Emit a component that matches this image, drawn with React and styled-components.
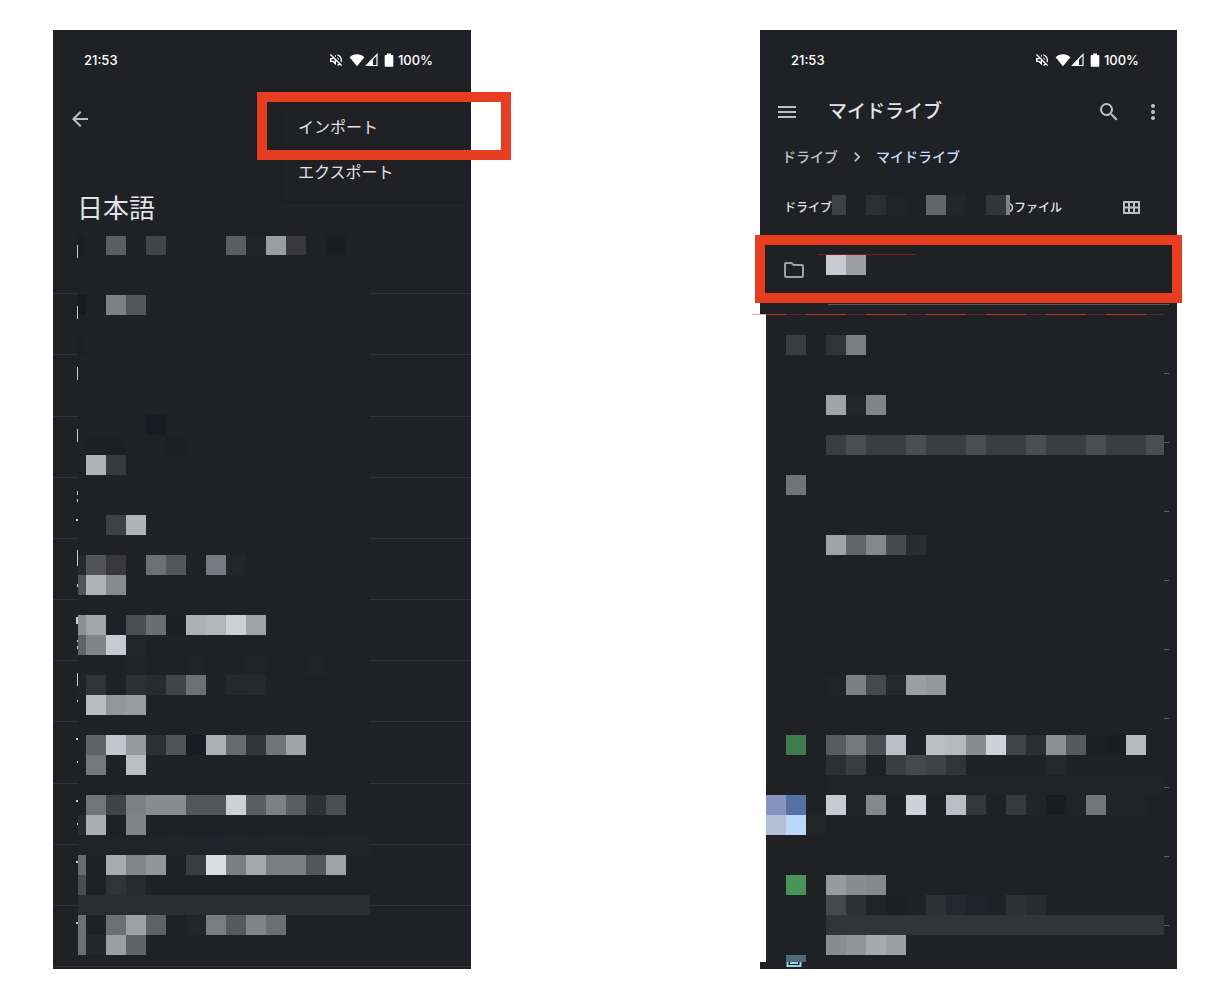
import React from "react";
import styled, { createGlobalStyle } from "styled-components";
import {
  MdArrowBack,
  MdChevronRight,
  MdMenu,
  MdMoreVert,
  MdOutlineFolder,
  MdOutlineVolumeOff,
  MdSearch,
} from "react-icons/md";

const color = {
  surface: "#202124",
  text: "#e2e3e7",
  muted: "#bdc1c6",
  dim: "#9aa0a6",
  link: "#c6dafc",
  rule: "#323336",
  driveRule: "#5c5e61",
  mark: "#e83d21",
};

const GlobalStyle = createGlobalStyle`
  *, *::before, *::after { box-sizing: border-box; }
  body {
    margin: 0;
    background: #fff;
    color: ${color.text};
    font-family: Inter, "Noto Sans CJK JP", sans-serif;
  }
`;

const Page = styled.main`
  display: flex;
  justify-content: space-between;
  gap: 24px;
  padding: 30px 41px 37px 53px;
`;

const Phone = styled.section`
  position: relative;
  display: flex;
  flex-direction: column;
  flex: 0 1 ${(p) => p.$basis}px;
  min-width: 0;
  background: ${color.surface};
`;

/* Status bar */
const StatusBar = styled.div`
  display: flex;
  align-items: center;
  justify-content: space-between;
  height: 60px;
  padding: 0 38px 0 31px;
  color: #fff;
  font-size: 13px;
  font-weight: 500;
  line-height: 20px;
`;

const StatusIcons = styled.div`
  display: flex;
  align-items: center;

  svg { display: block; }
  svg:first-child { margin-right: 5px; }
`;

const Percent = styled.span`
  margin-left: 1px;
`;

/* Buttons and bars */
const IconButton = styled.button`
  display: flex;
  align-items: center;
  justify-content: center;
  width: 24px;
  height: 24px;
  padding: 0;
  border: 0;
  background: none;
  color: ${color.muted};
  font-size: 24px;
  cursor: pointer;
`;

const BackBar = styled.header`
  display: flex;
  align-items: center;
  height: 58px;
  padding: 0 15px;
`;

const LanguageTitle = styled.h1`
  margin: 0;
  padding: 41px 24px 4px;
  font-size: 26px;
  font-weight: 400;
  line-height: 40px;
`;

const DriveBar = styled.header`
  display: flex;
  align-items: center;
  height: 44px;
  padding: 0 12px 0 15px;
  gap: 20px;
`;

const DriveTitle = styled.h1`
  flex: 1;
  margin: 0 0 0 9px;
  font-size: 19px;
  font-weight: 500;
  line-height: 28px;
`;

const Breadcrumb = styled.nav`
  display: flex;
  align-items: center;
  gap: 9px;
  height: 46px;
  padding: 0 22px;
  color: ${color.muted};
  font-size: 14px;
  line-height: 20px;
`;

const Crumb = styled.a`
  color: ${(p) => (p.$current ? color.link : color.muted)};
  font-weight: 500;
  text-decoration: none;
`;

const SortRow = styled.div`
  display: flex;
  align-items: center;
  height: 26px;
  margin: 15px 0;
  padding: 0 33px 0 24px;
  font-size: 12px;
  font-weight: 500;
  line-height: 26px;
`;

const OwnerTail = styled.span`
  flex: 1;
  margin-left: -8px;
`;

/* Options menu */
const OptionsMenu = styled.div`
  position: absolute;
  top: 74px;
  right: 4px;
  display: flex;
  flex-direction: column;
  width: 185px;
  padding-bottom: 7px;
  border-radius: 3px;
  box-shadow: 0 1px 3px rgba(0, 0, 0, 0.2);
`;

const MenuItem = styled.button`
  height: 45px;
  padding: 0 16px;
  border: 0;
  background: none;
  color: ${color.text};
  font-family: inherit;
  font-size: 16px;
  line-height: 24px;
  text-align: left;
  cursor: pointer;
`;

const MenuMark = styled.div`
  position: absolute;
  top: 62px;
  right: -40px;
  width: 254px;
  height: 68px;
  border: 10px solid ${color.mark};
  pointer-events: none;
`;

const RowMark = styled.div`
  position: absolute;
  top: -1px;
  right: -5px;
  left: -5px;
  height: 68px;
  border: 10px solid ${color.mark};
  pointer-events: none;
`;

/* Lists */
const WordList = styled.ul`
  display: grid;
  grid-template-rows: repeat(12, 1fr);
  height: 734px;
  margin: 0;
  padding: 0;
  list-style: none;
`;

const WordRow = styled.li`
  display: flex;
  flex-direction: column;
  align-items: flex-end;
  width: 100%;
  padding-right: calc(100% - 25px);
  border-bottom: 1px solid ${color.rule};
`;

const Sliver = styled.span`
  width: ${(p) => p.$width}px;
  height: ${(p) => p.$height}px;
  margin-top: ${(p) => p.$gap}px;
  background: #c9cacd;
`;

const FileList = styled.ul`
  margin: 0;
  padding: 0;
  list-style: none;
`;

const FileRow = styled.li`
  position: relative;
  display: flex;
  align-items: center;
  height: ${(p) => (p.$cut ? 43 : 69)}px;
  padding: 0 0 2px 22px;
  overflow: ${(p) => (p.$cut ? "hidden" : "visible")};

  &::after {
    content: "";
    position: absolute;
    right: 8px;
    bottom: 0;
    left: 68px;
    height: ${(p) => (p.$cut ? 0 : 1)}px;
    background: ${color.driveRule};
  }
`;

const FolderIcon = styled(MdOutlineFolder)`
  width: 24px;
  height: 24px;
  color: ${color.dim};
`;

const FolderName = styled.div`
  display: flex;
  align-self: flex-start;
  margin: 18px 0 0 12px;
  padding-left: 8px;
  width: 98px;
  border-top: 1px solid #6b241e;
`;

const ArchiveIcon = styled.svg`
  align-self: flex-end;
  width: 16px;
  height: 20px;
  margin-left: 4px;
`;

/* Pixelated cover */
const Strip = styled.div`
  position: relative;
  display: flex;
  align-self: flex-start;
  width: 178px;
  height: 20px;
  background: ${color.surface};
`;

const Block = styled.span`
  width: ${(p) => p.$width || 20}px;
  height: 20px;
  background: ${(p) => p.$tone};
`;

const WordMosaic = styled.div`
  position: absolute;
  top: 206px;
  left: 25px;
  display: grid;
  grid-template-columns: 8px repeat(14, 20px) 4px;
  grid-template-rows: 19px repeat(35, 20px) 6px;
  background: ${color.surface};
`;

const FileMosaic = styled.div`
  position: absolute;
  top: 284px;
  left: -8px;
  display: grid;
  grid-template-columns: 14px repeat(19, 20px) 18px;
  grid-template-rows: 1px repeat(32, 20px) 7px;
  background: linear-gradient(to right, #fff 14px, ${color.surface} 14px);
`;

const Cell = styled.span`
  grid-row: ${(p) => p.$row};
  grid-column: ${(p) => p.$column};
  background: ${(p) => p.$tone};
`;

/* Each line: grid row, first grid column, then one tone per cell ("." is empty). */
const wordTones = [
  [1, 1, "1c1d20 . 5c5d61 . 434447 . . . 5c5d61 222326 9c9da0 39393c . 1c1d20"],
  [4, 1, "191a1d . 7f8084 545558"],
  [6, 1, "1e1f22"],
  [9, 4, "1f2023"],
  [10, 4, "1f2023 181c20"],
  [11, 2, "1e1f23 1e1f23 . . 1e1f24"],
  [12, 2, "b1b2b6 38393c"],
  [15, 3, "404144 b2b3b7"],
  [17, 1, "28292c 535457 39393c . 6e6f72 545558 . 78797e 242528"],
  [18, 1, "525356 b0b1b5 88898d"],
  [20, 1, "8e8f92 a4a5a8 202126 4d4e51 6c6d70 1b1f21 aeafb2 b4b5b9 cfd0d3 a1a2a5"],
  [21, 1, "616265 838488 c9cacf 242528"],
  [22, 4, "222326 . . 222326 . . 222326 . . 222326"],
  [23, 1, "222326 333437 . 2e2f33 2a2b2d 434447 6e6f72 . 27282b 28292c"],
  [24, 2, "bbbcc1 95969a 9a9b9f"],
  [26, 2, "626366 c5c6cb 98999d 2f3033 535457 181c20 aeafb3 696a6d 353639 727376 a3a4a8"],
  [27, 2, "77787b . bcbdc1"],
  [29, 2, "737477 424346 7f8084 8b8c8f 8b8c8f 555659 555659 cfd0d4 5d5e62 7f8084 5d5e62 303134 4d4e52"],
  [30, 1, "2b2c2f acadb1 . 838488"],
  [31, 1, "222326 222328 222326 222326 222326 232427 222326 222328 232427 222326 232427 232427 222326 232427 232427 222326"],
  [32, 1, "6a6b6e . a9aaae 848588 94959a . 3b3c3f dcdde1 7d7e82 a7a8ac 7d7e82 7d7e82 55565a a1a2a5"],
  [33, 1, "4b4c4f . 323336 292a2e"],
  [35, 1, "6f7073 . 6e6f72 9fa0a4 606165 . 242528 7b7c80 58595d 838488 6d6e71"],
  [36, 1, "6f7073 262729 9d9ea3 626367"],
];

const fileTones = [
  [3, 3, "3b3c3f . 323336 7b7c7f"],
  [6, 5, "a2a3a6 242528 838487"],
  [8, 5, "3c3d40 4c4d50 3c3d40 3c3d40 4c4d50 3c3d40 3c3d40 4c4d50 3c3d40 3c3d40 4c4d50 3c3d40 3c3d40 4c4d50 3c3d40 3c3d40 4c4d50"],
  [10, 3, "727377"],
  [13, 5, "a1a2a5 646568 85868a 4a4b4e 2b2c2f"],
  [16, 3, "212225"],
  [20, 5, "222326 7e7f83 47484b 27282c 9d9ea2 95969a"],
  [23, 3, "3e7e4c . 5a5b5e 77787b 4c4d51 bcbdc2 . bdbec2 b8b9bd 8b8c90 d1d2d7 434447 2c2d30 8e8f93 58595c 1e1f22 1c1d20 b8b9bd"],
  [24, 5, "2d2e32 3b3c3f . 3c3d40 47484b 404144 333437 . . . . 27282b"],
  [26, 2, "8494be 5371a3 . c9cacf 222326 86878a . d0d1d6 . bcbdc2 363739 . 38393b 202528 1b1c1f 222326 737477 222326 222326"],
  [27, 2, "b3c0d8 bcd8f8 242528"],
  [30, 3, "479559 . 999a9e 8b8c8f 87888c"],
  [31, 5, "47484b 303134 222326 1e1f22 . 303134 24292d 222328 . 303134 2a2b2e"],
  [33, 5, "8b8c91 939498 a8a9ad 9d9ea2"],
  [34, 3, "4b6a76"],
];

/* Edges of letters beside the cover: [gap above, height, width] */
const wordEdges = [
  [[12, 13, 1]],
  [[12, 13, 1]],
  [[12, 13, 1]],
  [[12, 13, 1]],
  [[13, 4, 1], [4, 3, 1], [17, 2, 2]],
  [[11, 16, 1], [18, 3, 1]],
  [[17, 7, 2], [16, 2, 1], [4, 3, 1]],
  [[12, 13, 1], [14, 2, 1]],
  [[16, 2, 2], [21, 2, 1]],
  [[16, 2, 2], [21, 2, 1]],
  [[16, 2, 2]],
  [[16, 2, 2]],
];

function Cells({ lines }) {
  return lines.flatMap(([row, start, tones]) =>
    tones.split(" ").map((tone, i) =>
      tone === "." ? null : (
        <Cell key={`${row}-${start + i}`} $row={row} $column={start + i} $tone={`#${tone}`} />
      )
    )
  );
}

function Status() {
  return (
    <StatusBar>
      <span>21:53</span>
      <StatusIcons>
        <MdOutlineVolumeOff size={16} />
        <svg width="16" height="14" viewBox="0 0 16 14" fill="#fff">
          <path d="M8 13.2.6 4.2C2.6 2.3 5.100 1.200 8 1.200s5.400 1.100 7.400 3z" />
        </svg>
        <svg width="13" height="14" viewBox="0 0 13 14">
          <path d="M12 1.500V12.500H1.500z" fill="none" stroke="#fff" strokeWidth="1.200" />
          <path d="M8 5.500V12.800H.8z" fill="#fff" />
        </svg>
        <svg width="19" height="14" viewBox="0 0 19 14" fill="#fff">
          <path d="M9 .5h4v1.500h1.500q.8 0 .8.800V13q0 .8-.8.800H7.500q-.8 0-.8-.8V2.800q0-.8.8-.8H9z" />
        </svg>
        <Percent>100%</Percent>
      </StatusIcons>
    </StatusBar>
  );
}

function GridIcon() {
  return (
    <svg width="18" height="14" viewBox="0 0 18 14" fill="none" stroke="currentColor" strokeWidth="2">
      <path d="M1 1h15v11H1zM1 6.500h15M6 1v11M11 1v11" />
    </svg>
  );
}

function ImportPhone() {
  return (
    <Phone $basis={418}>
      <Status />
      <BackBar>
        <IconButton type="button" aria-label="戻る">
          <MdArrowBack />
        </IconButton>
      </BackBar>
      <LanguageTitle>日本語</LanguageTitle>
      <WordList>
        {wordEdges.map((edges, i) => (
          <WordRow key={i}>
            {edges.map(([gap, height, width], j) => (
              <Sliver key={j} $gap={gap} $height={height} $width={width} />
            ))}
          </WordRow>
        ))}
      </WordList>
      <WordMosaic>
        <Cells lines={wordTones} />
        <Cell $row={34} $column="1 / -1" $tone="#2c2d31" />
      </WordMosaic>
      <OptionsMenu>
        <MenuItem type="button">インポート</MenuItem>
        <MenuItem type="button">エクスポート</MenuItem>
      </OptionsMenu>
      <MenuMark />
    </Phone>
  );
}

function DrivePhone() {
  return (
    <Phone $basis={417}>
      <Status />
      <DriveBar>
        <IconButton type="button" aria-label="メニュー">
          <MdMenu />
        </IconButton>
        <DriveTitle>マイドライブ</DriveTitle>
        <IconButton type="button" aria-label="検索">
          <MdSearch />
        </IconButton>
        <IconButton type="button" aria-label="その他">
          <MdMoreVert />
        </IconButton>
      </DriveBar>
      <Breadcrumb>
        <Crumb href="#drive">ドライブ</Crumb>
        <MdChevronRight size={20} />
        <Crumb href="#my-drive" $current>
          マイドライブ
        </Crumb>
      </Breadcrumb>
      <SortRow>
        <span>ドライブ</span>
        <Strip>
          <Block $width={14} $tone="#404144" />
          <Block $tone={color.surface} />
          <Block $tone="#2d2e31" />
          <Block $tone="#222326" />
          <Block $tone={color.surface} />
          <Block $tone="#646568" />
          <Block $tone="#242528" />
          <Block $tone={color.surface} />
          <Block $tone="#343538" />
          <Block $width={4} $tone="#808185" />
        </Strip>
        <OwnerTail>のファイル</OwnerTail>
        <IconButton type="button" aria-label="グリッド表示">
          <GridIcon />
        </IconButton>
      </SortRow>
      <FileList>
        <FileRow>
          <FolderIcon />
          <FolderName>
            <Block $tone="#c9cacf" />
            <Block $tone="#9d9ea2" />
          </FolderName>
          <RowMark />
        </FileRow>
        {Array.from({ length: 9 }, (_, i) => (
          <FileRow key={i} />
        ))}
        <FileRow $cut>
          <ArchiveIcon viewBox="0 0 16 20">
            <path d="M1.500 2v17h13V2" fill="none" stroke="#8fd3e8" strokeWidth="2" />
            <path d="M4 15h8v2H4z" fill="#8fd3e8" />
          </ArchiveIcon>
        </FileRow>
      </FileList>
      <FileMosaic>
        <Cell $row={1} $column={1} $tone="#f2a196" />
        {Array.from({ length: 20 }, (_, i) => (
          <Cell key={i} $row={1} $column={i + 2} $tone={i % 3 === 1 ? "#5e2622" : "#b8321f"} />
        ))}
        <Cells lines={fileTones} />
        <Cell $row={25} $column="5 / -1" $tone="#222326" />
        <Cell $row={32} $column="5 / -1" $tone="#333438" />
      </FileMosaic>
    </Phone>
  );
}

export default function App() {
  return (
    <>
      <GlobalStyle />
      <Page>
        <ImportPhone />
        <DrivePhone />
      </Page>
    </>
  );
}
